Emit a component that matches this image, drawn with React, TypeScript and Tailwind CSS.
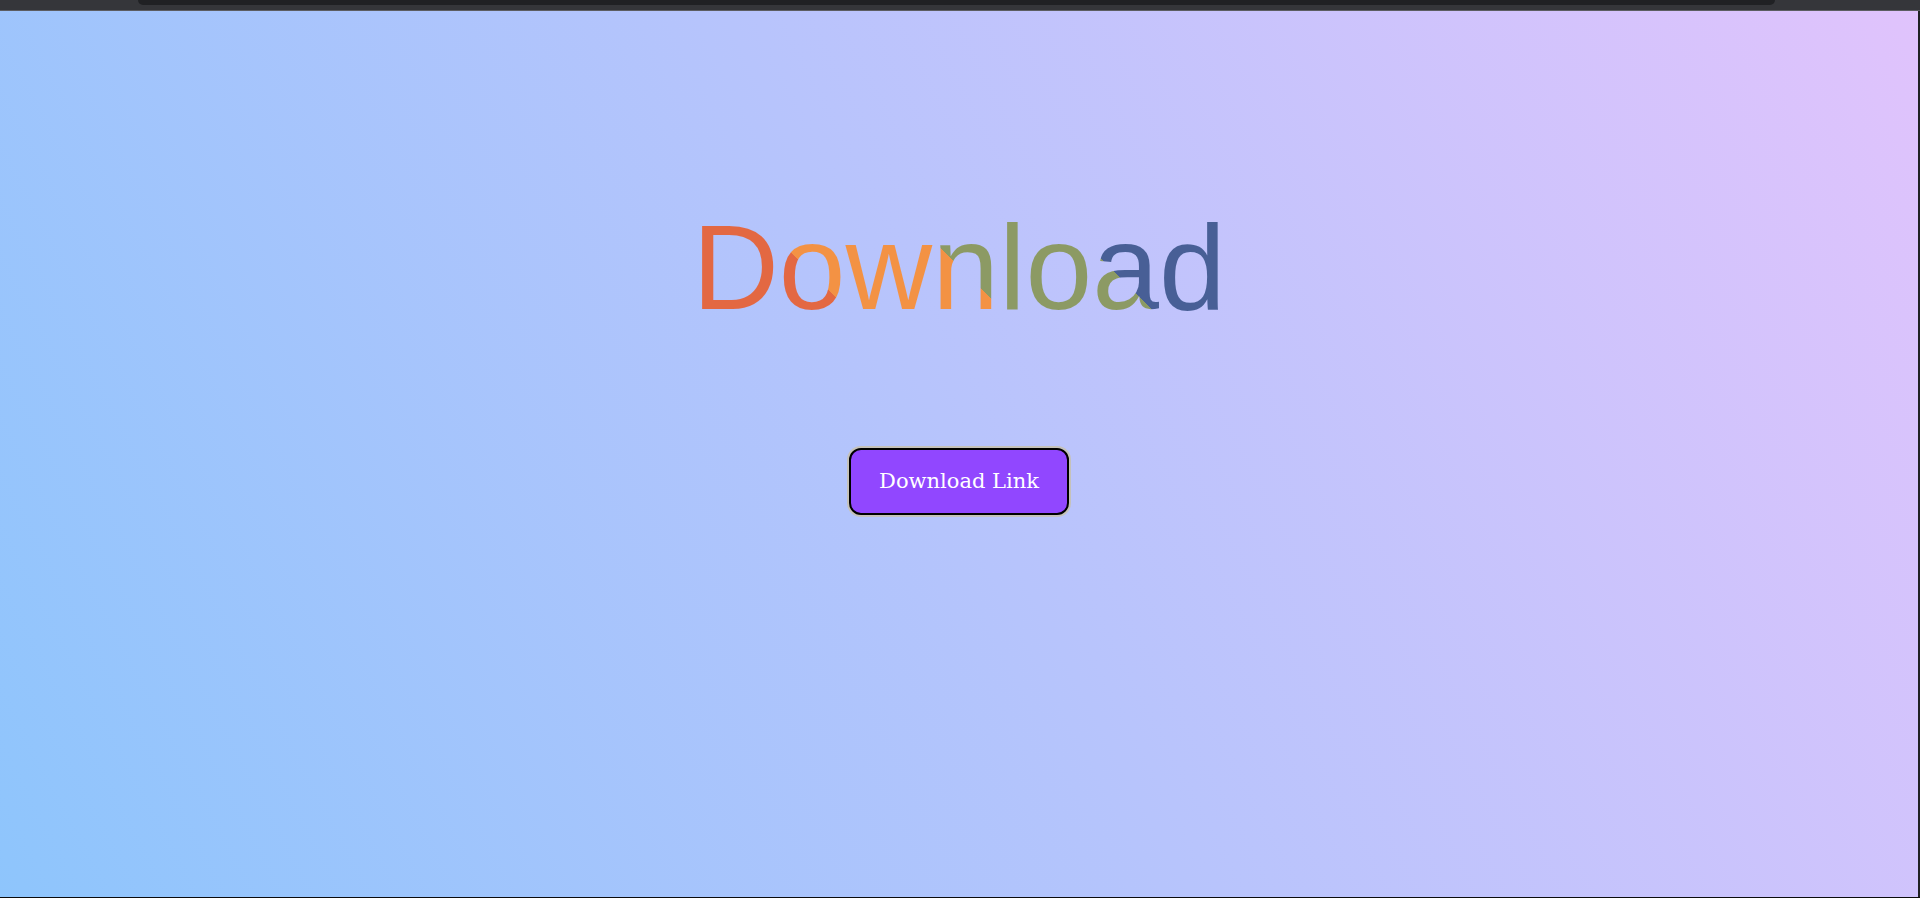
import React from "react";

export default function App() {
  return (
    <div className="w-full h-screen flex flex-col bg-[#35363a] overflow-hidden">
      {/* top chrome strip */}
      <div className="h-[10px] shrink-0 relative bg-[#35363a]">
        <div className="absolute left-[138px] right-[145px] top-0 h-[5px] rounded-b-[8px] bg-[#202124]" />
      </div>
      <div className="h-px shrink-0 bg-[#5c5d61]" />
      <div className="flex-1 flex min-h-0">
        <main className="flex-1 flex flex-col items-center bg-[#8EC5FC] bg-[linear-gradient(62deg,#8EC5FC_0%,#E0C3FC_100%)] pt-[189px]">
          <h1
            className="inline-block w-[534px] h-[134px] text-center text-[120px] leading-[134px] font-normal text-transparent bg-clip-text bg-[linear-gradient(45deg,#e36842_0%,#e36842_27%,#f39244_27%,#f39244_50%,#8c9a64_50%,#8c9a64_72.6%,#485f96_72.6%,#485f96_95.4%,#c2449a_95.4%,#c2449a_100%)]"
            style={{ fontFamily: '"Liberation Sans", Arial, sans-serif' }}
          >
            Download
          </h1>
          <button
            className="mt-[114px] w-[220px] h-[67px] rounded-xl border-2 border-black bg-[#9147ff] text-white text-[21px] ring-2 ring-[#c5c2ba] flex items-center justify-center"
            style={{ fontFamily: '"DejaVu Serif", "Liberation Serif", serif' }}
          >
            Download Link
          </button>
        </main>
        <div className="w-[2px] shrink-0 bg-[#202124]" />
      </div>
      <div className="h-px shrink-0 bg-[#0b0b0c]" />
    </div>
  );
}
